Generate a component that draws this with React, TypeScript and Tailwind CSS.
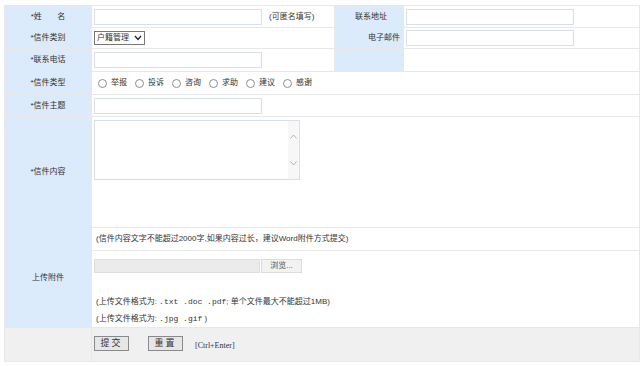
import { useState } from 'react';

const types = ['举报', '投诉', '咨询', '求助', '建议', '感谢'];

function Chevron({ up }: { up?: boolean }) {
  return (
    <svg width="7" height="5" viewBox="0 0 7 5" className="block">
      <path d={up ? 'M0.5 4.5 L3.5 1 L6.5 4.5' : 'M0.5 0.5 L3.5 4 L6.5 0.5'} fill="none" stroke="#b5b5b5" strokeWidth="1" />
    </svg>
  );
}

export default function App() {
  const [kind, setKind] = useState('');
  const label = 'bg-[#dbebfb] border border-[#e8e8e8] text-center text-[#333]';
  const cell = 'border border-[#e8e8e8] px-[2px]';
  const input = 'block h-[16px] border border-[#d9dfe6] bg-white outline-none';

  return (
    <div className="w-[643px] h-[366px] bg-white pt-[5px] pl-[4px] font-['Liberation_Sans','Noto_Sans_CJK_SC',sans-serif] text-[8px] leading-none text-[#333]">
      <table className="border-collapse w-[635px] table-fixed">
        <colgroup>
          <col className="w-[87px]" />
          <col className="w-[243px]" />
          <col className="w-[69px]" />
          <col className="w-[236px]" />
        </colgroup>
        <tbody>
          <tr className="h-[22px]">
            <td className={label}>*姓&nbsp;&nbsp;&nbsp;&nbsp;&nbsp;&nbsp;&nbsp;名</td>
            <td className={cell}>
              <div className="flex items-center">
                <input className={`${input} w-[168px]`} />
                <span className="ml-[7px]">(可匿名填写)</span>
              </div>
            </td>
            <td className={`${label} pl-[4px]`}>联系地址</td>
            <td className={cell}>
              <input className={`${input} w-[168px]`} />
            </td>
          </tr>
          <tr className="h-[21px]">
            <td className={label}>*信件类别</td>
            <td className={cell}>
              <div className="flex h-[14px] w-[51px] items-center justify-between border border-[#767676] bg-white px-[2px]">
                <span>户籍管理</span>
                <svg width="8" height="6" viewBox="0 0 8 6">
                  <path d="M1 1 L4 4.5 L7 1" fill="none" stroke="#222" strokeWidth="1.3" />
                </svg>
              </div>
            </td>
            <td className={`${label} text-right pr-[3px]`}>电子邮件</td>
            <td className={cell}>
              <input className={`${input} w-[168px]`} />
            </td>
          </tr>
          <tr className="h-[23px]">
            <td className={label}>*联系电话</td>
            <td className={cell}>
              <input className={`${input} w-[168px]`} />
            </td>
            <td className={label}></td>
            <td className={cell}></td>
          </tr>
          <tr className="h-[23px]">
            <td className={label}>*信件类型</td>
            <td className={cell} colSpan={3}>
              <div className="flex items-center pl-[4px]">
                {types.map(t => (
                  <label key={t} className="mr-[8px] flex items-center" onClick={() => setKind(t)}>
                    <span className="mr-[4px] flex h-[9px] w-[9px] items-center justify-center rounded-full border border-[#8f8f8f] bg-white">
                      {kind === t && <span className="h-[5px] w-[5px] rounded-full bg-[#333]" />}
                    </span>
                    {t}
                  </label>
                ))}
              </div>
            </td>
          </tr>
          <tr className="h-[22px]">
            <td className={label}>*信件主题</td>
            <td className={cell} colSpan={3}>
              <input className={`${input} w-[168px]`} />
            </td>
          </tr>
          <tr className="h-[111px]">
            <td className={label}>*信件内容</td>
            <td className={`${cell} align-top pt-[3px]`} colSpan={3}>
              <div className="flex h-[60px] w-[206px] border border-[#d9dfe6] bg-white">
                <textarea className="flex-1 resize-none outline-none" />
                <div className="flex w-[11px] flex-col items-center justify-between bg-[#f7f7f7] py-[13px]">
                  <Chevron up />
                  <Chevron />
                </div>
              </div>
            </td>
          </tr>
          <tr className="h-[100px]">
            <td className={label}>上传附件</td>
            <td className="border border-[#e8e8e8] p-0 align-top" colSpan={3}>
              <div className="flex h-[23px] items-center border-b border-[#e8e8e8] pl-[4px]">
                (信件内容文字不能超过2000字,如果内容过长，建议Word附件方式提交)
              </div>
              <div className="flex items-center pl-[2px] pt-[8px]">
                <div className="h-[14px] w-[166px] border border-[#dedede] bg-[#ebebeb]" />
                <button className="ml-[1px] h-[14px] w-[41px] border border-[#dcdcdc] bg-[#f2f2f2] text-[8px] text-[#555]">浏览...</button>
              </div>
              <div className="pl-[4px] pt-[25px]">(上传文件格式为: <span className="font-['Liberation_Mono',monospace]">.txt .doc .pdf</span>; 单个文件最大不能超过1MB)</div>
              <div className="pl-[4px] pt-[9px]">(上传文件格式为: <span className="font-['Liberation_Mono',monospace]">.jpg .gif</span> )</div>
            </td>
          </tr>
          <tr className="h-[34px] bg-[#f0f0f0]">
            <td className="border border-[#e8e8e8]"></td>
            <td className={`${cell} align-top pt-[8px]`} colSpan={3}>
              <div className="flex items-center">
                <button className="h-[15px] w-[35px] border border-[#8a8a8a] bg-[#e6e6e6] text-[9px] tracking-[2px] text-[#333]">提交</button>
                <button className="ml-[19px] h-[15px] w-[35px] border border-[#8a8a8a] bg-[#e6e6e6] text-[9px] tracking-[2px] text-[#333]">重置</button>
                <span className="ml-[12px] mt-[4px] font-['Liberation_Serif',serif] text-[8px]">[Ctrl+Enter]</span>
              </div>
            </td>
          </tr>
        </tbody>
      </table>
    </div>
  );
}
